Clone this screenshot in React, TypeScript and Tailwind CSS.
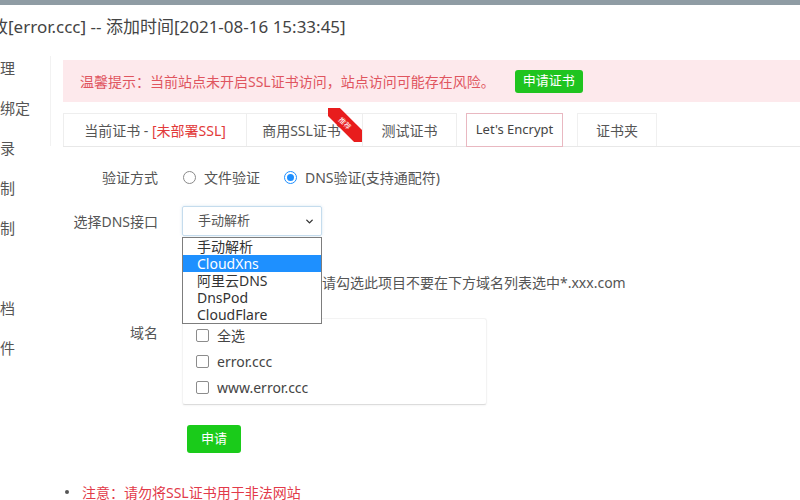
import React from "react";

const sideItems = ["域名管理", "子目录绑定", "网站目录", "访问限制", "流量限制", "伪静态", "默认文档", "配置文件", "SSL", "PHP", "重定向"];
const dnsOptions = ["手动解析", "CloudXns", "阿里云DNS", "DnsPod", "CloudFlare"];
const domains = ["全选", "error.ccc", "www.error.ccc"];

const Radio: React.FC<{ checked?: boolean; label: string }> = ({ checked, label }) => (
  <label className="flex items-center gap-[8px] mr-[24px]">
    {checked ? (
      <span className="w-[13px] h-[13px] rounded-full border border-[#1e8fff] flex items-center justify-center">
        <span className="w-[7px] h-[7px] rounded-full bg-[#1e8fff]"></span>
      </span>
    ) : (
      <span className="w-[13px] h-[13px] rounded-full border border-[#8a8a8a]"></span>
    )}
    <span>{label}</span>
  </label>
);

export default function App() {
  return (
    <div
      className="w-[800px] h-[500px] overflow-hidden bg-white text-[#555] flex flex-col"
      style={{ fontFamily: '"Noto Sans", "Noto Sans CJK SC", sans-serif' }}
    >
      <div className="h-[5px] bg-[#8f9ca4] shrink-0"></div>
      <div className="h-[43px] flex items-center text-[17px] text-[#444] whitespace-nowrap shrink-0">
        <span className="ml-[-60px]">站点修改[error.ccc] -- 添加时间[2021-08-16 15:33:45]</span>
      </div>

      <div className="flex flex-1">
        {/* side menu, mostly cut off */}
        <div className="w-[63px] shrink-0 overflow-hidden relative">
          <div className="absolute left-[50px] top-[8px] h-[90px] border-r border-[#f2f2f2]"></div>
          <ul className="ml-[-45px] text-[15px] text-[#555] whitespace-nowrap">
            {sideItems.map((s) => (
              <li key={s} className="h-[40px] flex items-center">{s}</li>
            ))}
          </ul>
        </div>

        <div className="flex-1 pt-[12px] text-[14px]">
          <div className="h-[42px] bg-[#fde9ec] flex items-center pl-[17px] text-[#e0555f] whitespace-nowrap">
            <span>温馨提示：当前站点未开启SSL证书访问，站点访问可能存在风险。</span>
            <button className="ml-[20px] h-[23px] w-[68px] rounded-[3px] bg-[#1fc41f] text-white text-[13px]">申请证书</button>
          </div>

          {/* tabs */}
          <div className="mt-[11px] flex items-end h-[34px] border-b border-[#e8e8e8] text-[14px] whitespace-nowrap">
            <div className="h-[33px] w-[183px] border-t border-l border-[#eee] flex items-center justify-center">
              当前证书 -&nbsp;<span className="text-[#e23a3a]">[未部署SSL]</span>
            </div>
            <div className="relative h-[33px] w-[116px] border-t border-l border-[#eee] flex items-center justify-center">
              <span className="mr-[6px]">商用SSL证书</span>
              <div className="absolute right-[0px] top-[-6px] w-[34px] h-[34px] overflow-hidden">
                <div className="absolute left-[-9px] top-[8px] w-[52px] h-[14px] bg-[#e81d1d] rotate-45 flex items-center justify-center text-[7px] leading-none text-white">
                  推荐
                </div>
              </div>
            </div>
            <div className="h-[33px] w-[95px] border-t border-l border-r border-[#eee] flex items-center justify-center">
              测试证书
            </div>
            <div className="ml-[9px] h-[34px] w-[97px] border border-[#e9b8c1] bg-white flex items-center justify-center text-[#444] mb-[-1px] text-[13px]">
              Let's Encrypt
            </div>
            <div className="ml-[14px] h-[33px] w-[80px] border-t border-l border-r border-[#f0f0f0] flex items-center justify-center">
              证书夹
            </div>
          </div>

          {/* form */}
          <div className="mt-[18px] flex items-center h-[24px]">
            <div className="w-[95px] text-right">验证方式</div>
            <div className="ml-[25px] flex items-center">
              <Radio label="文件验证" />
              <Radio checked label="DNS验证(支持通配符)" />
            </div>
          </div>

          <div className="mt-[17px] flex items-center h-[30px]">
            <div className="w-[95px] text-right">选择DNS接口</div>
            <div className="ml-[24px] relative z-10">
              <div className="w-[140px] h-[30px] border border-[#c5dced] rounded-[2px] shadow-[0_0_3px_rgba(120,170,210,0.3)] flex items-center justify-between pl-[15px] pr-[6px] text-[13px] text-[#555]">
                <span>手动解析</span>
                <svg width="11" height="11" viewBox="0 0 24 24" fill="none" stroke="#333" strokeWidth="3" strokeLinecap="round" strokeLinejoin="round">
                  <path d="M6 9l6 6 6-6" />
                </svg>
              </div>
              <ul className="absolute left-0 top-[31px] w-[140px] bg-white border border-[#7d7d7d] text-[14px] text-[#333]">
                {dnsOptions.map((o, i) => (
                  <li
                    key={o}
                    className={
                      i === 1
                        ? "h-[17px] leading-[17px] pl-[14px] bg-[#1e90ff] text-white"
                        : "h-[17px] leading-[17px] pl-[14px]"
                    }
                  >
                    {o}
                  </li>
                ))}
              </ul>
            </div>
          </div>

          <div className="mt-[30px] flex items-center h-[32px] whitespace-nowrap">
            <div className="w-[95px]"></div>
            <div className="ml-[24px] w-[140px] shrink-0"></div>
            <span>请勾选此项目不要在下方域名列表选中*.xxx.com</span>
          </div>

          <div className="mt-[20px] flex items-start">
            <div className="w-[95px] text-right pt-[4px]">域名</div>
            <div className="ml-[24px] w-[305px] h-[87px] pt-[3px] pl-[13px] border border-[#f3f3f3] border-b-[#dcdcdc] rounded-[3px] shadow-[0_1px_2px_rgba(0,0,0,0.04)]">
              {domains.map((d) => (
                <div key={d} className="h-[26px] flex items-center gap-[8px] text-[14px] text-[#444]">
                  <span className="w-[13px] h-[13px] border border-[#8c8c8c] rounded-[2px] bg-white"></span>
                  <span>{d}</span>
                </div>
              ))}
            </div>
          </div>

          <div className="mt-[20px] flex">
            <button className="ml-[124px] h-[28px] w-[54px] rounded-[3px] bg-[#1acb1a] text-white text-[13px]">申请</button>
          </div>

          <div className="mt-[29px] flex items-center h-[20px] whitespace-nowrap">
            <span className="w-[4px] h-[4px] rounded-full bg-[#555] ml-[2px]"></span>
            <span className="ml-[13px] text-[#e23a4a]">注意：请勿将SSL证书用于非法网站</span>
          </div>
        </div>
      </div>
    </div>
  );
}
